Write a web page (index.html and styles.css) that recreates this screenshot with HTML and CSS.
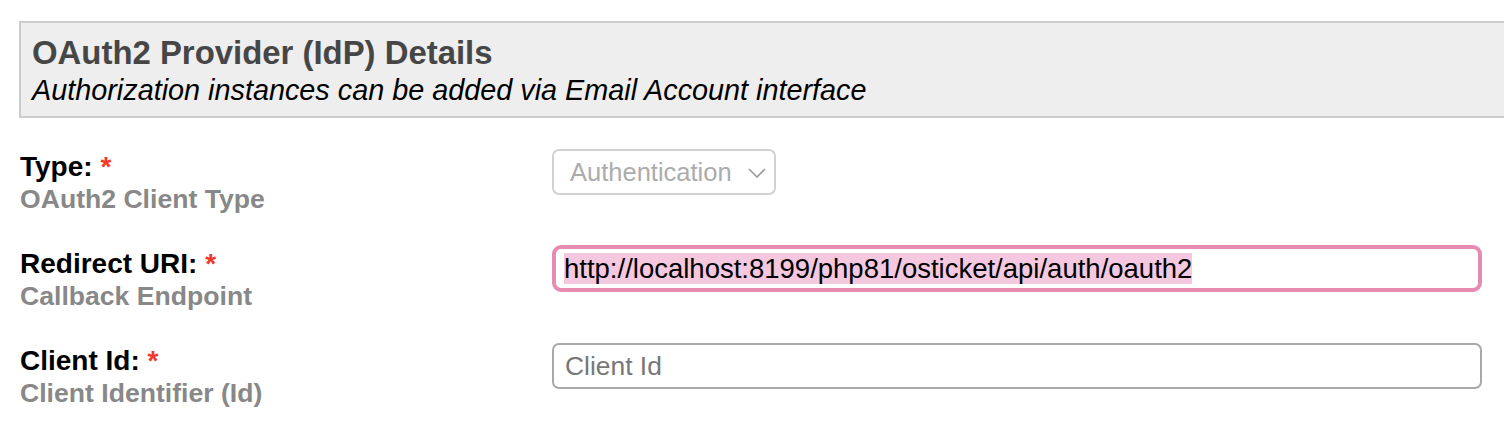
FILE: index.html
```html
<!DOCTYPE html>
<html lang="en">
<head>
<meta charset="utf-8">
<title>OAuth2 Provider (IdP) Details</title>
<link rel="stylesheet" href="styles.css">
</head>
<body>
<div class="page">
  <div class="section-head">
    <h2 class="section-title">OAuth2 Provider (IdP) Details</h2>
    <div class="section-sub">Authorization instances can be added via Email Account interface</div>
  </div>
  <div class="form">
    <div class="field-label">
      <div class="label">Type: <span class="req">*</span></div>
      <div class="hint">OAuth2 Client Type</div>
    </div>
    <div class="field-input">
      <div class="select">
        <span class="select-text">Authentication</span>
        <svg class="chev" width="18" height="10" viewBox="0 0 18 10"><path d="M1 1 L9 9 L17 1" fill="none" stroke="#9a9a9a" stroke-width="1.6"/></svg>
      </div>
    </div>

    <div class="field-label">
      <div class="label">Redirect URI: <span class="req">*</span></div>
      <div class="hint">Callback Endpoint</div>
    </div>
    <div class="field-input">
      <div class="text-input focused"><span class="sel">http://localhost:8199/php81/osticket/api/auth/oauth2</span></div>
    </div>

    <div class="field-label">
      <div class="label">Client Id: <span class="req">*</span></div>
      <div class="hint">Client Identifier (Id)</div>
    </div>
    <div class="field-input">
      <div class="text-input plain"><span class="placeholder">Client Id</span></div>
    </div>
  </div>
</div>
</body>
</html>
```

FILE: styles.css
```css
html, body {
  margin: 0;
  padding: 0;
  background: #fff;
  overflow: hidden;
}
body {
  font-family: "Liberation Sans", Arial, Helvetica, sans-serif;
  color: #000;
}
.page {
  padding: 21px 0 0 19px;
}
.section-head {
  background: #eeeeee;
  border: 2px solid #cccccc;
  border-right: none;
  padding: 12px 10px 8px 11px;
}
.section-title {
  margin: 0;
  font-size: 32.9px;
  line-height: 36px;
  font-weight: bold;
  color: #464646;
}
.section-sub {
  margin-top: 1px;
  font-size: 28.8px;
  line-height: 36px;
  font-style: italic;
  color: #000;
}
.form {
  display: grid;
  grid-template-columns: 532px 930px;
  row-gap: 31px;
  margin-top: 31px;
  margin-left: 1px;
}
.field-label {
  padding-top: 2px;
  height: 64px;
}
.label {
  font-size: 28px;
  line-height: 32px;
  font-weight: bold;
  color: #000;
}
.req {
  color: #f2382b;
}
.hint {
  font-size: 26.6px;
  line-height: 33px;
  font-weight: bold;
  color: #888888;
}
.select {
  box-sizing: border-box;
  width: 224px;
  height: 46px;
  border: 2px solid #d2d2d2;
  border-radius: 7px;
  display: flex;
  align-items: center;
  justify-content: space-between;
  padding: 0 8px 0 16px;
}
.select-text {
  font-size: 25.5px;
  color: #acacac;
}
.chev {
  display: block;
  margin-top: 1px;
}
.text-input {
  box-sizing: border-box;
  width: 930px;
  display: flex;
  align-items: center;
}
.text-input.focused {
  height: 47px;
  margin-top: -1px;
  border: 4px solid #e68bb1;
  border-radius: 9px;
  padding-left: 8px;
}
.sel {
  background: #f4c9df;
  font-size: 27.5px;
  line-height: 31px;
  color: #000;
}
.text-input.plain {
  height: 46px;
  border: 2px solid #a9a9a9;
  border-radius: 7px;
  padding-left: 11px;
}
.placeholder {
  font-size: 26.4px;
  color: #777777;
}
```
